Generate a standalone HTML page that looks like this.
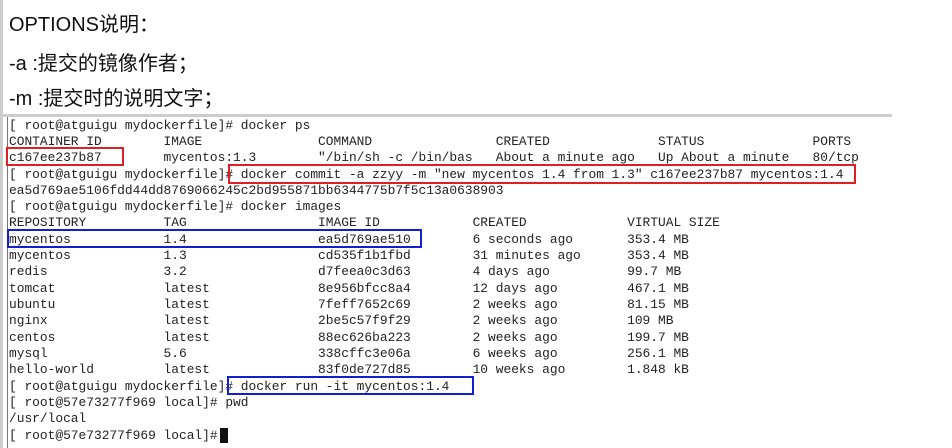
<!DOCTYPE html>
<html><head><meta charset="utf-8"><style>
body{margin:0;width:952px;height:448px;background:#fff;position:relative;overflow:hidden;}
.h{position:absolute;left:9px;font-family:"Liberation Sans","Noto Sans CJK SC",sans-serif;font-size:20px;color:#111;white-space:nowrap;}
.l{position:absolute;left:9px;font-family:"Liberation Mono","DejaVu Sans Mono",monospace;font-size:12.88px;line-height:16px;height:16px;white-space:pre;color:#222;}
.b{position:absolute;border:2px solid;box-sizing:border-box;}
</style></head><body>
<div style="position:absolute;left:0;top:0;width:3px;height:448px;background:#ccc"></div>
<div class="h" style="top:8px">OPTIONS说明：</div>
<div class="h" style="top:47px">-a :提交的镜像作者；</div>
<div class="h" style="top:82px">-m :提交时的说明文字；</div>
<div style="position:absolute;left:3px;top:114px;width:889px;height:3px;background:#ccc"></div>
<div style="position:absolute;left:7px;top:117px;width:1px;height:331px;background:#777"></div>
<div class="l" style="top:118px">[ root@atguigu mydockerfile]# docker ps</div>
<div class="l" style="top:134px">CONTAINER ID        IMAGE               COMMAND                CREATED              STATUS              PORTS</div>
<div class="l" style="top:150px">c167ee237b87        mycentos:1.3        "/bin/sh -c /bin/bas   About a minute ago   Up About a minute   80/tcp</div>
<div class="l" style="top:167px">[ root@atguigu mydockerfile]# docker commit -a zzyy -m "new mycentos 1.4 from 1.3" c167ee237b87 mycentos:1.4</div>
<div class="l" style="top:183px">ea5d769ae5106fdd44dd8769066245c2bd955871bb6344775b7f5c13a0638903</div>
<div class="l" style="top:199px">[ root@atguigu mydockerfile]# docker images</div>
<div class="l" style="top:215px">REPOSITORY          TAG                 IMAGE ID            CREATED             VIRTUAL SIZE</div>
<div class="l" style="top:232px">mycentos            1.4                 ea5d769ae510        6 seconds ago       353.4 MB</div>
<div class="l" style="top:248px">mycentos            1.3                 cd535f1b1fbd        31 minutes ago      353.4 MB</div>
<div class="l" style="top:264px">redis               3.2                 d7feea0c3d63        4 days ago          99.7 MB</div>
<div class="l" style="top:281px">tomcat              latest              8e956bfcc8a4        12 days ago         467.1 MB</div>
<div class="l" style="top:297px">ubuntu              latest              7feff7652c69        2 weeks ago         81.15 MB</div>
<div class="l" style="top:313px">nginx               latest              2be5c57f9f29        2 weeks ago         109 MB</div>
<div class="l" style="top:330px">centos              latest              88ec626ba223        2 weeks ago         199.7 MB</div>
<div class="l" style="top:346px">mysql               5.6                 338cffc3e06a        6 weeks ago         256.1 MB</div>
<div class="l" style="top:362px">hello-world         latest              83f0de727d85        10 weeks ago        1.848 kB</div>
<div class="l" style="top:379px">[ root@atguigu mydockerfile]# docker run -it mycentos:1.4</div>
<div class="l" style="top:395px">[ root@57e73277f969 local]# pwd</div>
<div class="l" style="top:411px">/usr/local</div>
<div class="l" style="top:428px">[ root@57e73277f969 local]# </div>
<div style="position:absolute;left:220px;top:428px;width:8px;height:15px;background:#111"></div>
<div class="b" style="left:6px;top:147px;width:118px;height:19px;border-color:#e02020"></div>
<div class="b" style="left:228px;top:164px;width:628px;height:20px;border-color:#e02020"></div>
<div class="b" style="left:7px;top:229px;width:415px;height:19px;border-color:#1020d0"></div>
<div class="b" style="left:227px;top:376px;width:247px;height:19px;border-color:#1020d0"></div>
</body></html>
